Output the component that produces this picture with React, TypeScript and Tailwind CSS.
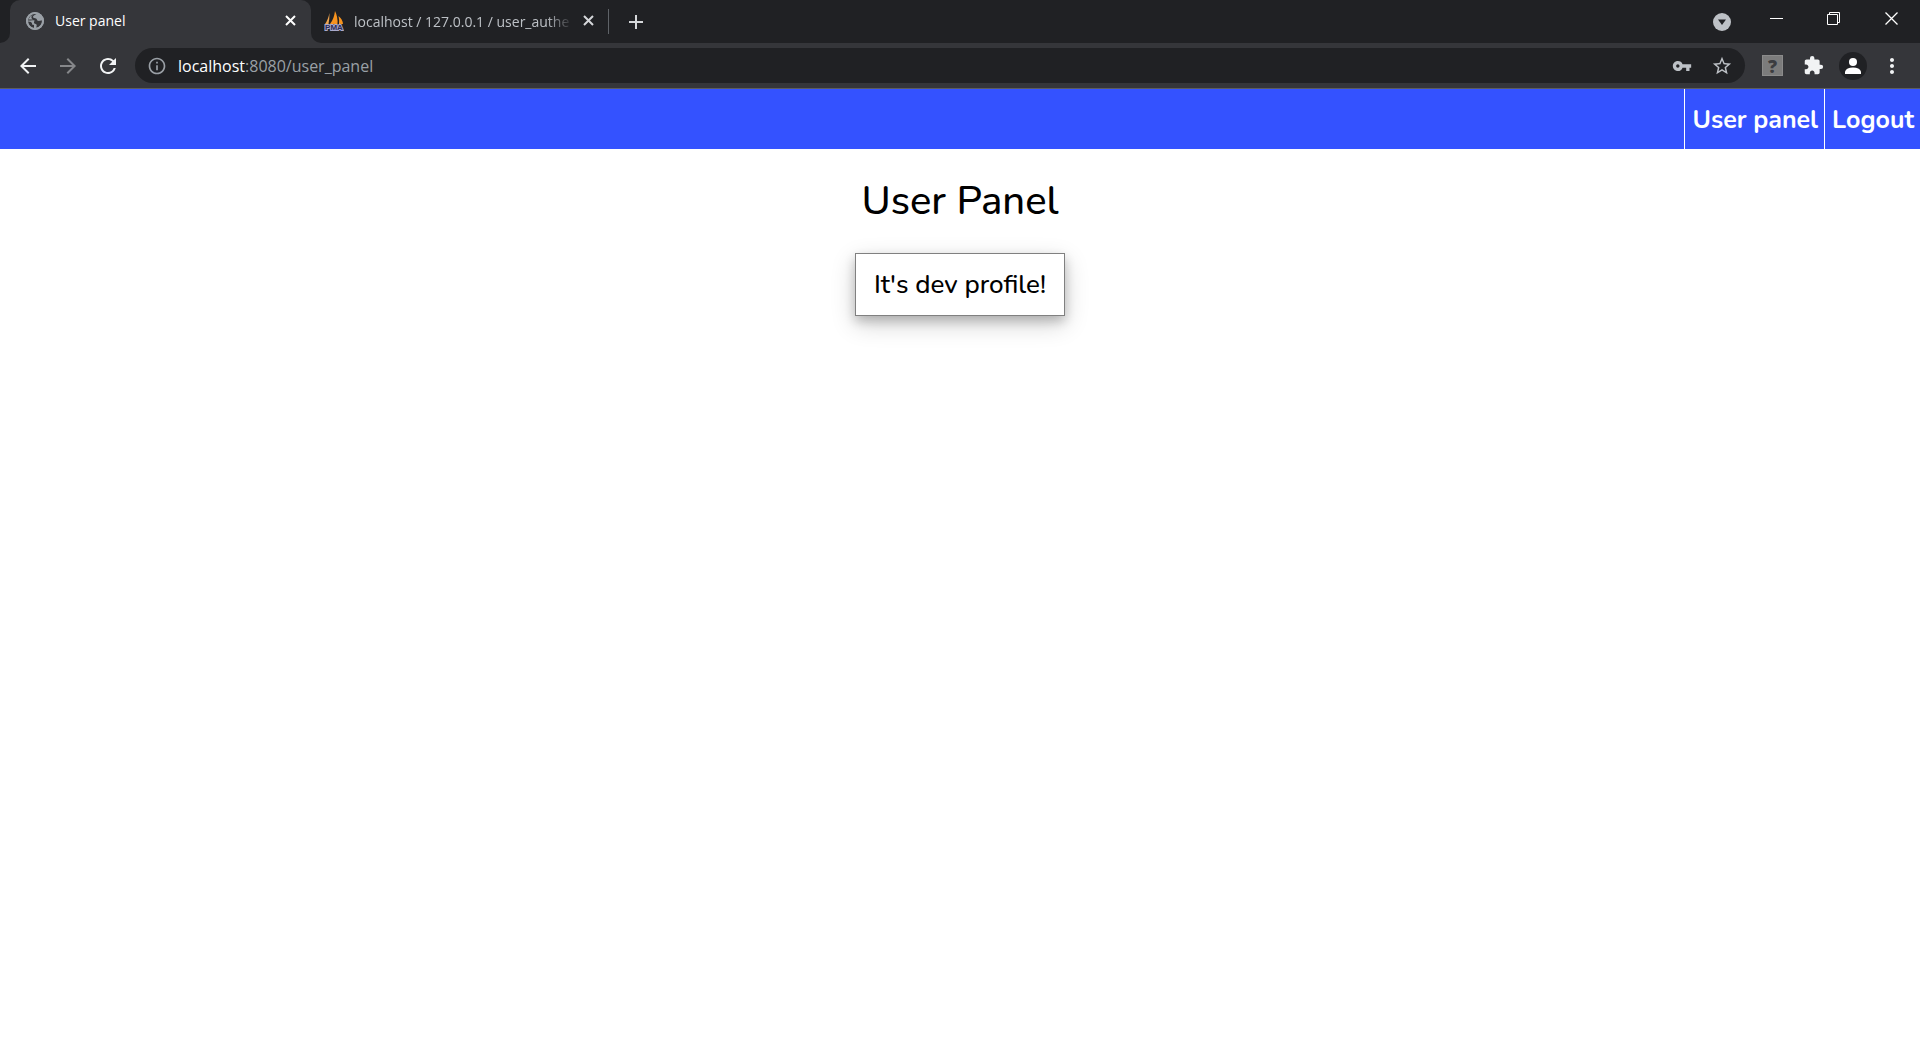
import type { ReactNode } from "react";
import {
  MdArrowBack,
  MdArrowForward,
  MdExtension,
  MdInfoOutline,
  MdMoreVert,
  MdRefresh,
  MdStarBorder,
  MdVpnKey,
} from "react-icons/md";

function GlobeFavicon() {
  return (
    <svg className="h-[18px] w-[18px] shrink-0" viewBox="0 0 18 18" aria-hidden="true">
      <circle cx="9" cy="9" r="9" fill="#9aa0a6" />
      <path
        d="M10.500 2.200 C8.500 3 6.800 3.600 7 5 C7.200 6.300 9 6 10 6.500 C11.200 7.200 10.800 8.500 12 8.800 C13.500 9.200 14.500 8 16 8.500 C16 12 14 14.800 10.500 15.800 C10 14.600 11.200 13.400 10.500 12.400 C9.700 11.500 8.200 12 8 10.700 C7.800 9.500 9 9.200 8.500 8.600 C7 8 4.500 8.600 2 8.600 C2.200 5 4.800 2 9 2Z"
        fill="#35363a"
      />
      <path d="M2 9.500 L5 10 Q6.500 11 6 12.500 L8 13 V16 Q3 15 2 9.500Z" fill="#35363a" />
      <path d="M2.400 7.500 Q3.500 4 7 2.700 L5.500 4.500 Q5 7 7.500 7.600Z" fill="#9aa0a6" />
      <circle cx="9" cy="9" r="8.100" fill="none" stroke="#9aa0a6" strokeWidth="1.800" />
    </svg>
  );
}

function SailFavicon() {
  return (
    <svg className="h-5 w-5 shrink-0" viewBox="0 0 20 20" aria-hidden="true">
      <path d="M5.500 2 Q5.500 8 4.500 13 L1 13 Q4 9 5.500 2Z" fill="#f0a550" />
      <path d="M11 0 Q14 6 13.500 13 L6 13 Q10 8 11 0Z" fill="#f7931e" />
      <path d="M14.500 5 Q18.500 8 19 13 L15 13 Q15.500 9 14.500 5Z" fill="#f7931e" />
      <text
        x="10"
        y="19"
        textAnchor="middle"
        className="fill-[#2b2b55] stroke-[#a9a9cb] stroke-2 font-['Liberation_Sans',sans-serif] text-[8px] font-bold [paint-order:stroke]"
      >
        PMA
      </text>
    </svg>
  );
}

function CrossIcon() {
  return (
    <svg className="h-[11px] w-[11px]" viewBox="0 0 11 11" aria-hidden="true">
      <path d="M1 1 L10 10 M10 1 L1 10" stroke="currentColor" strokeWidth="2" />
    </svg>
  );
}

function IconButton({ label, className = "", children }: { label: string; className?: string; children: ReactNode }) {
  return (
    <button type="button" aria-label={label} className={`flex shrink-0 items-center justify-center ${className}`}>
      {children}
    </button>
  );
}

function TabStrip() {
  return (
    <div className="flex h-[43px] bg-[#202124]">
      <div className="w-[10px] bg-[#35363a]">
        <div className="h-full rounded-br-[10px] bg-[#202124]" />
      </div>
      <div className="flex w-[301px] items-center rounded-t-[10px] bg-[#35363a] pr-[11px] pb-[2px] pl-4">
        <GlobeFavicon />
        <span className="ml-[11px] flex-1 text-[14px] leading-5 text-white">User panel</span>
        <IconButton label="Close User panel tab" className="h-5 w-5 text-white">
          <CrossIcon />
        </IconButton>
      </div>
      <div className="bg-[#35363a]">
        <div className="flex h-full w-[297px] items-center rounded-bl-[10px] bg-[#202124] pr-[10px] pb-[2px] pl-[13px]">
          <SailFavicon />
          <div className="ml-[10px] w-[219px] overflow-hidden [mask-image:linear-gradient(to_right,black_88%,transparent)]">
            <span className="text-[14px] leading-5 whitespace-nowrap text-[#bdc1c6]">
              localhost / 127.0.0.1 / user_authe
            </span>
          </div>
          <IconButton label="Close localhost tab" className="ml-auto h-5 w-5 text-[#d5d7da]">
            <CrossIcon />
          </IconButton>
        </div>
      </div>
      <div className="mt-[9px] h-[25px] w-px bg-[#5f6368]" />
      <IconButton label="New tab" className="ml-[11px] w-8 text-[#d5d7da]">
        <svg className="h-4 w-4" viewBox="0 0 16 16" aria-hidden="true">
          <path d="M8 1 V15 M1 8 H15" stroke="currentColor" strokeWidth="2" />
        </svg>
      </IconButton>
      <div className="ml-auto flex h-full items-start text-white">
        <IconButton label="Search tabs" className="mt-[13px] mr-2 w-9">
          <svg className="h-[18px] w-[18px]" viewBox="0 0 18 18" aria-hidden="true">
            <circle cx="9" cy="9" r="9" fill="#bdc1c6" />
            <path d="M5 6.500 H13 L9 12Z" fill="#202124" />
          </svg>
        </IconButton>
        <IconButton label="Minimize" className="h-[37px] w-[57px]">
          <span className="h-px w-[13px] bg-white" />
        </IconButton>
        <IconButton label="Restore" className="h-[37px] w-[57px]">
          <svg className="h-[13px] w-[13px]" viewBox="0 0 13 13" fill="none" stroke="currentColor" aria-hidden="true">
            <path d="M.5 2.500 H10.500 V12.500 H.5Z M2.500 2.500 V.5 H12.500 V10.500 H10.500" />
          </svg>
        </IconButton>
        <IconButton label="Close window" className="h-[37px] w-[58px]">
          <svg className="h-[13px] w-[13px]" viewBox="0 0 13 13" aria-hidden="true">
            <path d="M.5 .5 L12.500 12.500 M12.500 .5 L.5 12.500" stroke="currentColor" strokeWidth="1.3" />
          </svg>
        </IconButton>
      </div>
    </div>
  );
}

function Toolbar() {
  return (
    <div className="flex h-[46px] items-center border-b border-[#5c5d60] bg-[#35363a] pr-4 pl-2 text-[#f1f3f4]">
      <IconButton label="Back" className="h-10 w-10">
        <MdArrowBack className="h-6 w-6" />
      </IconButton>
      <IconButton label="Forward" className="h-10 w-10 text-[#86878a]">
        <MdArrowForward className="h-6 w-6" />
      </IconButton>
      <IconButton label="Reload" className="h-10 w-10">
        <MdRefresh className="h-6 w-6" />
      </IconButton>
      <div className="ml-[7px] flex h-[35px] flex-1 items-center rounded-full bg-[#202124] pr-[11px] pl-3">
        <IconButton label="View site information" className="h-5 w-5 text-[#9aa0a6]">
          <MdInfoOutline className="h-5 w-5" />
        </IconButton>
        <a href="/user_panel" className="ml-[11px] flex-1 text-[16px] leading-6 text-[#9aa0a6]">
          <span className="text-white">localhost</span>:8080/user_panel
        </a>
        <IconButton label="Passwords" className="h-6 w-6 text-[#bdc1c6]">
          <MdVpnKey className="h-5 w-5" />
        </IconButton>
        <IconButton label="Bookmark this tab" className="ml-4 h-6 w-6 text-[#bdc1c6]">
          <MdStarBorder className="h-[22px] w-[22px]" />
        </IconButton>
      </div>
      <IconButton label="Extension" className="ml-[17px] h-[21px] w-[21px] border border-[#8b8b8b] bg-[#7c7c7c]">
        <span className="text-[18px] leading-5 font-extrabold text-[#3c3d40]">?</span>
      </IconButton>
      <IconButton label="Extensions" className="ml-[19px] h-[22px] w-[22px]">
        <MdExtension className="h-[21px] w-[21px]" />
      </IconButton>
      <IconButton label="Profile" className="ml-[15px] h-7 w-7 rounded-full bg-[#202124] text-white">
        <svg className="h-4 w-4" viewBox="0 0 16 16" fill="currentColor" aria-hidden="true">
          <circle cx="8" cy="4" r="4" />
          <path d="M0 16 V13.500 Q1.500 9.500 8 9.500 Q14.500 9.500 16 13.500 V16Z" />
        </svg>
      </IconButton>
      <IconButton label="Menu" className="ml-[13px] h-6 w-6">
        <MdMoreVert className="h-6 w-6" />
      </IconButton>
    </div>
  );
}

export default function App() {
  return (
    <div className="min-h-screen bg-white font-['Open_Sans','Noto_Sans',sans-serif] text-black">
      <header>
        <TabStrip />
        <Toolbar />
      </header>
      <nav className="flex justify-end bg-[#3452ff] font-['Nunito','Open_Sans',sans-serif] text-[25px] leading-[58px] font-bold text-white">
        <a href="/user_panel" className="border-l border-white pt-[2px] pr-[6px] pl-[7px]">
          User panel
        </a>
        <a href="/logout" className="border-l border-white pt-[2px] pr-[6px] pl-[7px]">
          Logout
        </a>
      </nav>
      <main className="flex flex-col items-center font-['Nunito','Open_Sans',sans-serif]">
        <h1 className="mt-6 text-[40px] leading-[56px] font-medium">User Panel</h1>
        <div className="mt-6 border border-[#808080] bg-white px-[18px] text-[26px] leading-[61px] font-medium shadow-[0_5px_10px_rgba(0,0,0,0.2),0_8px_25px_rgba(0,0,0,0.19)]">
          It's dev profile!
        </div>
      </main>
    </div>
  );
}
